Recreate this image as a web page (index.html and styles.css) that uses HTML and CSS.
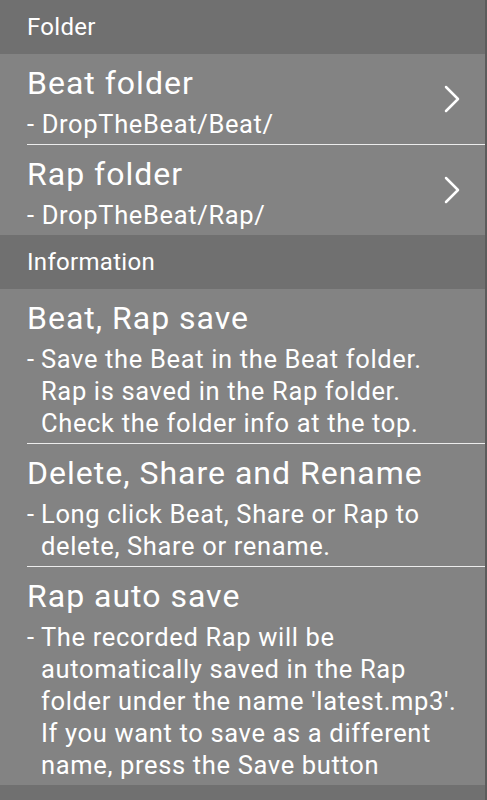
FILE: index.html
```html
<!DOCTYPE html>
<html lang="en">
<head>
    <meta charset="UTF-8">
    <meta name="viewport" content="width=device-width, initial-scale=1.0">
    <title>Settings</title>
    <link rel="stylesheet" href="styles.css">
</head>
<body>

<div class="screen">
    <div class="section-head">Folder</div>

    <div class="item">
        <div class="item-text">
            <div class="item-title">Beat folder</div>
            <div class="item-sub">- DropTheBeat/Beat/</div>
        </div>
        <svg class="chevron" width="16" height="28" viewBox="0 0 16 28">
            <polyline points="2,2 14,14 2,26" fill="none" stroke="#fff" stroke-width="2.5" stroke-linecap="round" stroke-linejoin="round"/>
        </svg>
    </div>

    <div class="item last">
        <div class="item-text">
            <div class="item-title">Rap folder</div>
            <div class="item-sub">- DropTheBeat/Rap/</div>
        </div>
        <svg class="chevron" width="16" height="28" viewBox="0 0 16 28">
            <polyline points="2,2 14,14 2,26" fill="none" stroke="#fff" stroke-width="2.5" stroke-linecap="round" stroke-linejoin="round"/>
        </svg>
    </div>

    <div class="section-head">Information</div>

    <div class="item">
        <div class="item-text">
            <div class="item-title">Beat, Rap save</div>
            <div class="item-body">
                <span class="dash">-</span>
                <span>Save the Beat in the Beat folder.<br>Rap is saved in the Rap folder.<br>Check the folder info at the top.</span>
            </div>
        </div>
    </div>

    <div class="item">
        <div class="item-text">
            <div class="item-title">Delete, Share and Rename</div>
            <div class="item-body">
                <span class="dash">-</span>
                <span>Long click Beat, Share or Rap to<br>delete, Share or rename.</span>
            </div>
        </div>
    </div>

    <div class="item last">
        <div class="item-text">
            <div class="item-title">Rap auto save</div>
            <div class="item-body">
                <span class="dash">-</span>
                <span>The recorded Rap will be<br>automatically saved in the Rap<br>folder under the name 'latest.mp3'.<br>If you want to save as a different<br>name, press the Save button</span>
            </div>
        </div>
    </div>

    <div class="section-head"></div>
</div>

</body>
</html>
```

FILE: styles.css
```css
body {
    margin: 0;
    font-family: Roboto, "Noto Sans", sans-serif;
    background-color: #838383;
    color: #fff;
}
.screen {
    height: 800px;
    overflow: hidden;
    background-color: #838383;
    border-right: 2px solid #5c5c5c;
}
.section-head {
    height: 54px;
    line-height: 54px;
    padding-left: 27px;
    font-size: 24px;
    letter-spacing: 0.3px;
    background-color: #707070;
}
.item {
    display: flex;
    align-items: center;
    margin-left: 27px;
    padding: 4px 0;
    border-bottom: 1px solid #ececec;
}
.item.last {
    border-bottom: none;
}
.item-text {
    flex: 1;
}
.item-title {
    font-size: 32px;
    line-height: 50px;
    letter-spacing: 1px;
}
.item-sub,
.item-body {
    font-size: 25.5px;
    line-height: 32px;
    letter-spacing: 0.65px;
    white-space: nowrap;
}
.item-body {
    display: flex;
}
.dash {
    width: 14px;
    flex-shrink: 0;
}
.chevron {
    margin-right: 25px;
    flex-shrink: 0;
}
```
